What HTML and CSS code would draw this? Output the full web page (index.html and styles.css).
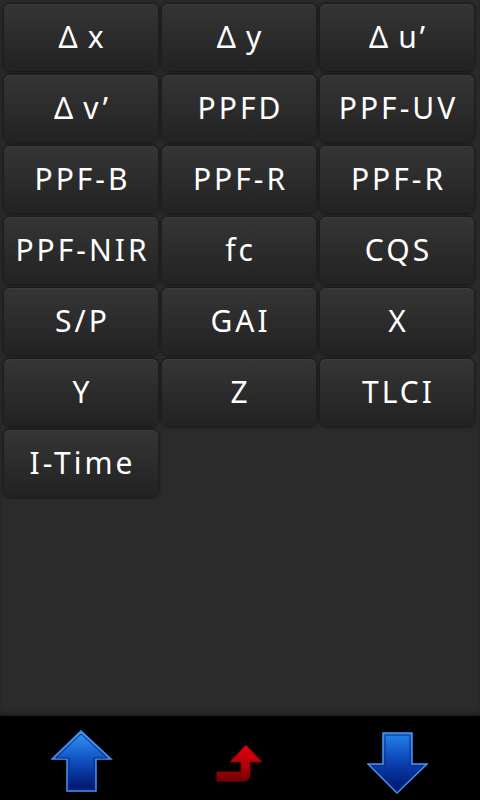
FILE: index.html
```html
<!DOCTYPE html>
<html lang="en">
<head>
	<meta charset="UTF-8">
	<title>Parameters</title>
	<link rel="stylesheet" href="styles.css">
</head>
<body>
	<div id="panel">
		<div class="key"><span class="delta">&Delta;</span>x</div>
		<div class="key"><span class="delta">&Delta;</span>y</div>
		<div class="key"><span class="delta">&Delta;</span>u&rsquo;</div>
		<div class="key"><span class="delta">&Delta;</span>v&rsquo;</div>
		<div class="key">PPFD</div>
		<div class="key">PPF-UV</div>
		<div class="key">PPF-B</div>
		<div class="key">PPF-R</div>
		<div class="key">PPF-R</div>
		<div class="key">PPF-NIR</div>
		<div class="key">fc</div>
		<div class="key">CQS</div>
		<div class="key">S/P</div>
		<div class="key">GAI</div>
		<div class="key">X</div>
		<div class="key">Y</div>
		<div class="key">Z</div>
		<div class="key">TLCI</div>
		<div class="key">I-Time</div>
	</div>
	<div id="bar">
		<a href="javascript:;" class="nav up">
			<svg width="62" height="64" viewBox="0 0 62 64">
				<defs>
					<linearGradient id="gUp" x1="0" y1="0" x2="0" y2="1">
						<stop offset="0" stop-color="#3597f5"/>
						<stop offset="0.5" stop-color="#0f4fc0"/>
						<stop offset="1" stop-color="#001066"/>
					</linearGradient>
				</defs>
				<polygon points="30,2 60,30 45,30 45,62 16,62 16,30 1,30" fill="url(#gUp)" stroke="#4a92f0" stroke-width="1.5"/>
				<polygon points="30,5 56,29 43,29 43,60 18,60 18,29 5,29" fill="none" stroke="#0a2f8c" stroke-width="1"/>
			</svg>
		</a>
		<a href="javascript:;" class="nav back">
			<svg width="48" height="40" viewBox="0 0 48 40">
				<defs>
					<linearGradient id="gRed" x1="0" y1="0" x2="0" y2="1">
						<stop offset="0" stop-color="#e0000c"/>
						<stop offset="0.6" stop-color="#b00008"/>
						<stop offset="1" stop-color="#6a0004"/>
					</linearGradient>
				</defs>
				<path d="M30 1 L46 18 L34 18 L34 30 Q34 37 27 37 L1 37 L1 28 L25 28 L25 18 L14 18 Z" fill="url(#gRed)" stroke="#8a0006" stroke-width="1"/>
			</svg>
		</a>
		<a href="javascript:;" class="nav down">
			<svg width="62" height="64" viewBox="0 0 62 64">
				<defs>
					<linearGradient id="gDown" x1="0" y1="0" x2="0" y2="1">
						<stop offset="0" stop-color="#2283ee"/>
						<stop offset="0.5" stop-color="#0a40b0"/>
						<stop offset="1" stop-color="#001066"/>
					</linearGradient>
				</defs>
				<polygon points="16,2 45,2 45,33 60,33 30,62 1,33 16,33" fill="url(#gDown)" stroke="#4a92f0" stroke-width="1.5"/>
				<polygon points="18,4 43,4 43,35 56,35 30,59 5,35 18,35" fill="none" stroke="#0a2f8c" stroke-width="1"/>
			</svg>
		</a>
	</div>
</body>
</html>
```

FILE: styles.css
```css
	body{
		margin:0;
		background:#000;
		font-family:"Noto Sans","Open Sans","DejaVu Sans",sans-serif;
	}
	#panel{
		height:708px;
		padding:4px 6px 4px 4px;
		background:#2b2b2b;
		display:grid;
		grid-template-columns:repeat(3,154px);
		grid-auto-rows:67px;
		gap:4px;
		align-content:start;
		box-shadow:inset 0 -4px 4px -2px #1a1a1a;
	}
	.key{
		display:flex;
		align-items:center;
		justify-content:center;
		padding:0 0 3px 3px;
		border-radius:6px;
		background:linear-gradient(#353535,#222);
		box-shadow:0 0 3px 1px #161616,inset 0 1px 0 #3c3c3c;
		color:#fff;
		font-size:30px;
		letter-spacing:3px;
	}
	.delta{ margin-right:7px;}
	#bar{
		height:84px;
		display:flex;
		justify-content:space-around;
		align-items:center;
	}
	.nav{
		display:block;
		line-height:0;
	}
	.up{ margin-top:6px;}
	.back{ margin-top:12px;}
	.down{ margin-top:10px;}
```
